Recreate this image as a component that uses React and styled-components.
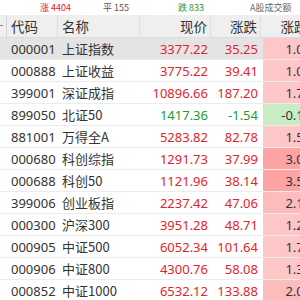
import React from "react";
import styled, { createGlobalStyle } from "styled-components";

const GlobalStyle = createGlobalStyle`
  html, body {
    margin: 0;
    padding: 0;
    background: #fff;
    overflow: hidden;
  }
  body {
    font-family: "Noto Sans", "Noto Sans CJK SC", sans-serif;
  }
`;

const Page = styled.div`
  width: 330px;
  height: 300px;
  overflow: hidden;
`;

const StatBar = styled.div`
  display: grid;
  grid-template-columns: 63px 75px 72px auto;
  height: 15px;
  padding-left: 40px;
  align-items: center;
  font-size: 9px;
  line-height: 15px;
  font-family: "Noto Sans CJK SC", sans-serif;
`;

const Stat = styled.span`
  color: ${(p) => p.$color};
  white-space: nowrap;
`;

const COLS = "7px 51px 82px 71px 50px 64px";

const HeaderRow = styled.div`
  display: grid;
  grid-template-columns: ${COLS};
  height: 23px;
  background: #efefef;
  border-bottom: 1px solid #dcdcdc;
  box-sizing: border-box;
`;

const HeadCell = styled.div`
  display: flex;
  align-items: center;
  justify-content: ${(p) => (p.$right ? "flex-end" : "flex-start")};
  padding: ${(p) => (p.$right ? "0 3px 0 0" : "0 0 0 4px")};
  border-right: 1px solid #dedede;
  font-size: 13.5px;
  color: #333;
  font-family: "Noto Sans CJK SC", sans-serif;
  white-space: nowrap;
  overflow: hidden;
`;

const Corner = styled.div`
  position: relative;
  border-right: 1px solid #d6d6d6;
  &::after {
    content: "";
    position: absolute;
    left: 0;
    top: 10px;
    width: 3px;
    height: 1px;
    background: #888;
  }
`;

const Row = styled.div`
  display: grid;
  grid-template-columns: ${COLS};
  height: 22px;
  background: ${(p) => (p.$selected ? "#e4e4e4" : "#fff")};
  border-bottom: 1px solid #ececec;
  box-sizing: border-box;
`;

const Cell = styled.div`
  display: flex;
  align-items: center;
  justify-content: ${(p) => (p.$right ? "flex-end" : "flex-start")};
  padding: ${(p) => (p.$right ? "0 3px 0 0" : "0 0 0 4px")};
  font-size: 13px;
  color: ${(p) => p.$color || "#333"};
  white-space: nowrap;
  overflow: hidden;
`;

const NameCell = styled(Cell)`
  font-family: "Noto Sans CJK SC", sans-serif;
`;

const PctCell = styled(Cell)`
  margin-left: 2px;
  color: #333;
  background: ${(p) => p.$bg};
`;

const RED = "#e0242c";
const GREEN = "#1e9a2e";

const rows = [
  ["000001", "上证指数", 3377.22, 35.25],
  ["000888", "上证收益", 3775.22, 39.41],
  ["399001", "深证成指", 10896.66, 187.2],
  ["899050", "北证50", 1417.36, -1.54],
  ["881001", "万得全A", 5283.82, 82.78],
  ["000680", "科创综指", 1291.73, 37.99],
  ["000688", "科创50", 1121.96, 38.14],
  ["399006", "创业板指", 2237.42, 47.06],
  ["000300", "沪深300", 3951.28, 48.71],
  ["000905", "中证500", 6052.34, 101.64],
  ["000906", "中证800", 4300.76, 58.08],
  ["000852", "中证1000", 6532.12, 133.88],
];

const pctBg = (pct) => {
  if (pct < 0) return "#c9ecc2";
  if (pct >= 3) return "#fda3a3";
  if (pct >= 2) return "#fdbcbc";
  return "#fdc7c7";
};

export default function App() {
  return (
    <Page>
      <GlobalStyle />
      <StatBar>
        <Stat $color={RED}>涨 4404</Stat>
        <Stat $color="#555">平 155</Stat>
        <Stat $color={GREEN}>跌 833</Stat>
        <Stat $color="#666">A股成交额</Stat>
      </StatBar>
      <HeaderRow>
        <Corner />
        <HeadCell>代码</HeadCell>
        <HeadCell>名称</HeadCell>
        <HeadCell $right>现价</HeadCell>
        <HeadCell $right>涨跌</HeadCell>
        <HeadCell $right>涨跌幅</HeadCell>
      </HeaderRow>
      {rows.map(([code, name, price, chg], i) => {
        const pct = (chg / (price - chg)) * 100;
        const color = chg < 0 ? GREEN : RED;
        return (
          <Row key={code} $selected={i === 0}>
            <Cell />
            <Cell>{code}</Cell>
            <NameCell>{name}</NameCell>
            <Cell $right $color={color}>{price.toFixed(2)}</Cell>
            <Cell $right $color={color}>{chg.toFixed(2)}</Cell>
            <PctCell $right $bg={pctBg(pct)}>
              {pct.toFixed(2)}%
            </PctCell>
          </Row>
        );
      })}
    </Page>
  );
}
